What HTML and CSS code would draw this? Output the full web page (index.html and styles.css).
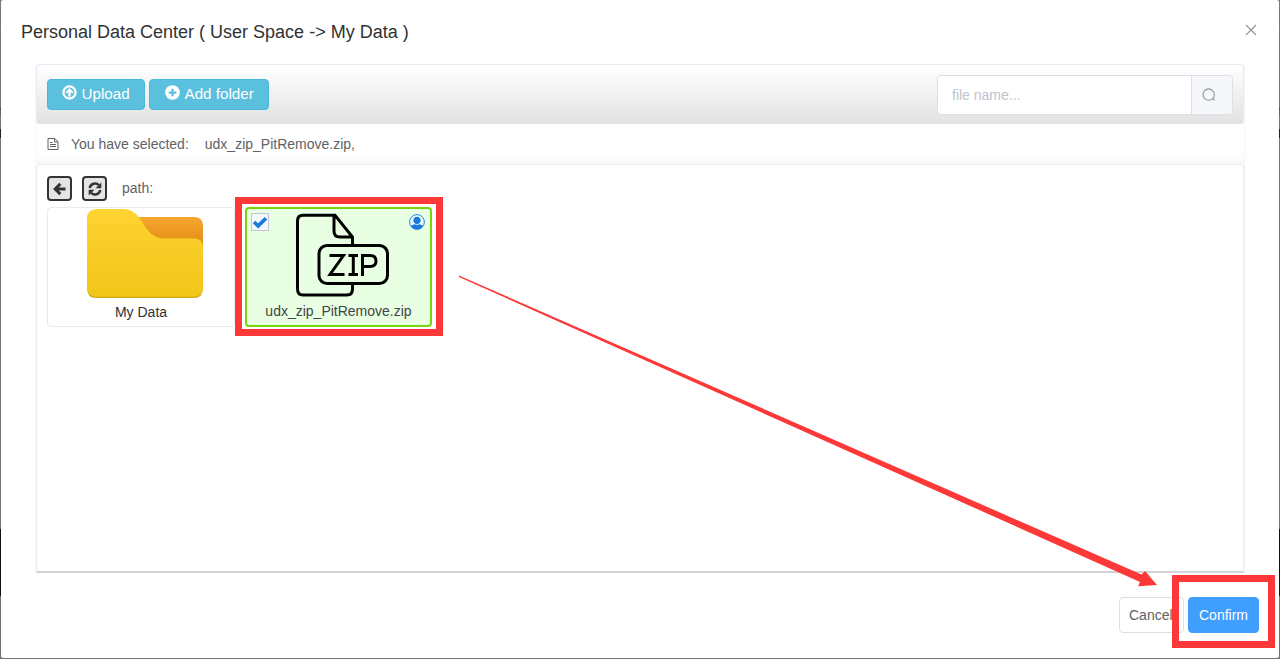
FILE: index.html
```html
<!DOCTYPE html>
<html lang="en">
<head>
<meta charset="utf-8">
<title>Personal Data Center</title>
<link rel="stylesheet" href="styles.css">
</head>
<body>
<div class="dialog">
  <header class="dialog-header">
    <span class="dialog-title">Personal Data Center ( User Space -&gt; My Data )</span>
    <svg class="close" viewBox="0 0 12 12"><path d="M1 1L11 11M11 1L1 11"/></svg>
  </header>
  <main class="card">
    <div class="toolbar">
      <button class="btn-info upload"><svg viewBox="0 0 16 16"><circle cx="8" cy="8" r="6.5" fill="none" stroke="#fff" stroke-width="2.4"/><path d="M8 3.3L12.3 7.8L11 9.100L9.300 7.500V12.300H6.700V7.500L5 9.100L3.700 7.800Z" fill="#fff"/></svg>Upload</button>
      <button class="btn-info add"><svg viewBox="0 0 16 16"><circle cx="8" cy="8" r="7.8" fill="#fff"/><path d="M8 4V12M4 8H12" stroke="#5bc0de" stroke-width="2.4"/></svg>Add folder</button>
      <div class="search">
        <span class="search-text">file name...</span>
        <span class="search-button"><svg viewBox="0 0 14 14"><circle cx="6.7" cy="6.6" r="5.7"/><path d="M10.8 10.7L12.6 12.4"/></svg></span>
      </div>
    </div>
    <div class="selected">
      <svg viewBox="0 0 12 14"><path d="M1 1.500H7.700L11 4.700V12.500H1ZM7.500 1.500V5H11M3 5.500H5.500M3 7.500H9M3 9.500H9"/></svg>
      <span>You have selected:</span><span class="selected-name">udx_zip_PitRemove.zip,</span>
    </div>
    <section class="browser">
      <div class="path-row">
        <span class="tool"><svg viewBox="0 0 14 14"><path d="M12.5 7H3M7.300 1.900L2.200 7L7.300 12.100" fill="none" stroke="#333" stroke-width="3"/></svg></span>
        <span class="tool"><svg viewBox="0 0 14 14"><path d="M1.700 6A5.400 5.400 0 0 1 10.900 3.200M12.300 8A5.400 5.400 0 0 1 3.100 10.800" fill="none" stroke="#333" stroke-width="2.500"/><path d="M13.300 .5V6.200H7.600ZM.7 13.500V7.800H6.400Z" fill="#333"/></svg></span>
        <span class="path-label">path:</span>
      </div>
      <div class="files">
        <div class="file">
          <svg class="folder" viewBox="0 0 116 89">
            <defs>
              <linearGradient id="tab" x2="0" y2="1"><stop offset="0" stop-color="#f9a72f"/><stop offset=".6" stop-color="#e6921b"/></linearGradient>
              <linearGradient id="front" x2="0" y2="1"><stop offset="0" stop-color="#ffd331"/><stop offset="1" stop-color="#f1c519"/></linearGradient>
            </defs>
            <path d="M45 8H107Q116 8 116 17V45H50Z" fill="url(#tab)"/>
            <path d="M0 12Q0 1 10 1H36C58 1 54 30 76 30H107Q116 30 116 39V79Q116 89 107 89H9Q0 89 0 79Z" fill="#d3ad18"/>
            <path d="M0 10Q0 0 10 0H36C58 0 54 29.500 78 29.500H107Q116 29.500 116 38.500V78Q116 87.500 107 87.500H9Q0 87.500 0 78Z" fill="url(#front)"/>
          </svg>
          <span class="file-name">My Data</span>
        </div>
        <div class="file chosen">
          <span class="check"><svg viewBox="0 0 16 16"><path d="M2 8L6.200 11.900L14 4.300" fill="none" stroke="#187be0" stroke-width="3.600"/></svg></span>
          <svg class="user" viewBox="0 0 16 16"><circle cx="8" cy="8" r="7.4" fill="#eef9ff" stroke="#2485dc"/><circle cx="8" cy="6.3" r="3.6" fill="#187bda"/><path d="M1.8 12Q4 10.4 6 10.2Q8 11.3 10 10.2Q12.2 10.4 14.2 12A7.4 7.4 0 0 1 1.8 12" fill="#187bda"/></svg>
          <svg class="zip" viewBox="0 0 94 84">
            <g fill="none" stroke="#000" stroke-width="3">
              <path d="M57.5 32V24L40 2.200H8Q2.500 2.200 2.500 8V76Q2.500 82 8 82H52Q57.500 82 57.500 76V70M39 2V18Q39 24 45 24H57.500"/>
              <rect x="24" y="32.500" width="68.500" height="38" rx="8"/>
              <path d="M34.500 42.500H48.500L35 61.500H49.500M53.500 42.500H63M58.300 42.500V61.500M53.500 61.500H63M67.500 63V42.500H75Q81 42.500 81 48T75 53.500H67.500"/>
            </g>
          </svg>
          <span class="file-name">udx_zip_PitRemove.zip</span>
          <span class="mark mark-file"></span>
        </div>
      </div>
    </section>
  </main>
  <footer class="dialog-footer">
    <button class="btn">Cancel</button>
    <div class="confirm-wrap"><button class="btn primary">Confirm</button><span class="mark mark-confirm"></span></div>
  </footer>
</div>
<svg class="arrow" viewBox="0 0 1280 659"><path d="M459 275.500L1141.500 574.500L1145 571L1157 585L1138 586.300L1140 582L459 277Z" fill="#fc3938"/></svg>
</body>
</html>
```
FILE: styles.css
```css
* { box-sizing: border-box; }
body {
  margin: 0;
  height: 659px;
  padding: 0 1px 1px;
  overflow: hidden;
  background: linear-gradient(#777 0 30px, #78889a 30px 31px, #777 31px 36px, #4179a5 36px 37px, #777 37px 108px, #333 108px 109px, #666 109px 116px, #777 116px 129px, #222 129px 138px, #777 138px 529px, #111 529px 596px, #707070 596px);
  font: 14px/20px "Liberation Sans", Arial, sans-serif;
  color: #606266;
}
button { font-family: inherit; }
.dialog {
  height: 658px;
  padding: 0 34px;
  background: #fff;
  border-radius: 2px;
}
.dialog-header {
  display: flex;
  justify-content: space-between;
  height: 64px;
  margin: 0 -14px;
  padding: 20px 0 0;
}
.dialog-title { font-size: 18px; line-height: 24px; color: #303133; }
.close { width: 12px; height: 12px; margin: 4px 2px 0 0; fill: none; stroke: #909399; stroke-width: 1.1; }
.card { height: 509px; padding: 0 1px; box-shadow: inset 1px 0 #f8f8fb, inset -1px 0 #f4f4f8; }
.toolbar {
  display: flex;
  height: 60px;
  padding: 10px 10px 0;
  border: 1px solid #e8eaf5;
  border-bottom-color: #e2e2e4;
  border-radius: 4px;
  background: linear-gradient(#fff, #e2e2e2);
}
.btn-info {
  display: flex;
  height: 31px;
  margin: 4px 4px 0 0;
  padding: 4px 0 0 14px;
  border: 1px solid #46b8da;
  border-radius: 4px;
  background: #5bc0de;
  color: #fff;
  font-size: 15.2px;
  line-height: 20px;
}
.btn-info svg { width: 15px; height: 15px; margin: 1px 4.500px 0 0; }
.upload { width: 98px; }
.add { width: 120px; padding-left: 15px; }
.search {
  display: flex;
  width: 296px;
  height: 40px;
  margin-left: auto;
  border: 1px solid #dcdfe6;
  border-radius: 4px;
  background: #fff;
}
.search-text { flex: 1; padding: 9px 14px; color: #c0c4cc; }
.search-button { width: 41px; padding: 12px 10px; border-left: 1px solid #dcdfe6; border-radius: 0 3px 3px 0; background: #f5f7fa; }
.search-button svg { display: block; width: 14px; height: 14px; fill: none; stroke: #909399; stroke-width: 1.1; }
.selected { display: flex; height: 40px; padding: 10px 11px; background: linear-gradient(#fff 28px, #f8f8f8); }
.selected svg { width: 12px; height: 14px; margin: 3px 12px 0 0; fill: none; stroke: #606266; stroke-width: 1; }
.selected-name { margin-left: 16px; }
.browser {
  height: 409px;
  padding: 11px 10px 0;
  border: 1px solid #e8eaf5;
  border-bottom: 2px solid #d4d4d7;
  border-radius: 4px 4px 0 0;
  background: #fff;
}
.path-row { display: flex; gap: 10px; height: 31px; }
.tool { width: 25px; height: 25px; padding: 3px; border: 2px solid #333; border-radius: 4px; background: #e4e4e4; }
.tool svg { display: block; width: 14px; height: 14px; margin: .5px 0 0 .5px; }
.path-label { margin: 2px 0 0 5px; }
.files { display: flex; gap: 10px; }
.file {
  position: relative;
  display: flex;
  flex-direction: column;
  align-items: center;
  width: 188px;
  height: 120px;
  border: 1px solid #e8eaf2;
  border-radius: 4px;
  color: #303133;
}
.folder { width: 116px; height: 89px; margin: 1px 0 4px 8px; }
.chosen { width: 187px; border: 2px solid #76d60b; background: #e8ffe4; color: #444; }
.zip { width: 94px; height: 84px; margin: 4px 0 4px 6px; }
.check { position: absolute; left: 4px; top: 4px; width: 18px; height: 18px; border: 1px solid #c3c5d4; background: #f4f7fc; }
.check svg { display: block; width: 16px; height: 16px; }
.user { position: absolute; right: 5px; top: 5px; width: 16px; height: 16px; }
.mark { position: absolute; border: 7px solid #fc3938; pointer-events: none; }
.mark-file { left: -12px; top: -12px; width: 208px; height: 139px; }
.dialog-footer { display: flex; gap: 4px; justify-content: flex-end; margin: 24px -14px 0 0; }
.btn { display: block; width: 65px; height: 36px; padding: 0 9px; border: 1px solid #dcdfe6; border-radius: 4px; background: #fff; color: #606266; font-size: 14px; text-align: left; }
.primary { width: 71px; padding: 0; border-color: #409eff; background: #409eff; color: #fff; text-align: center; }
.confirm-wrap { position: relative; }
.mark-confirm { left: -16px; top: -22px; width: 103px; height: 73px; }
.arrow { position: absolute; left: 0; top: 0; width: 1280px; height: 659px; pointer-events: none; }
```
